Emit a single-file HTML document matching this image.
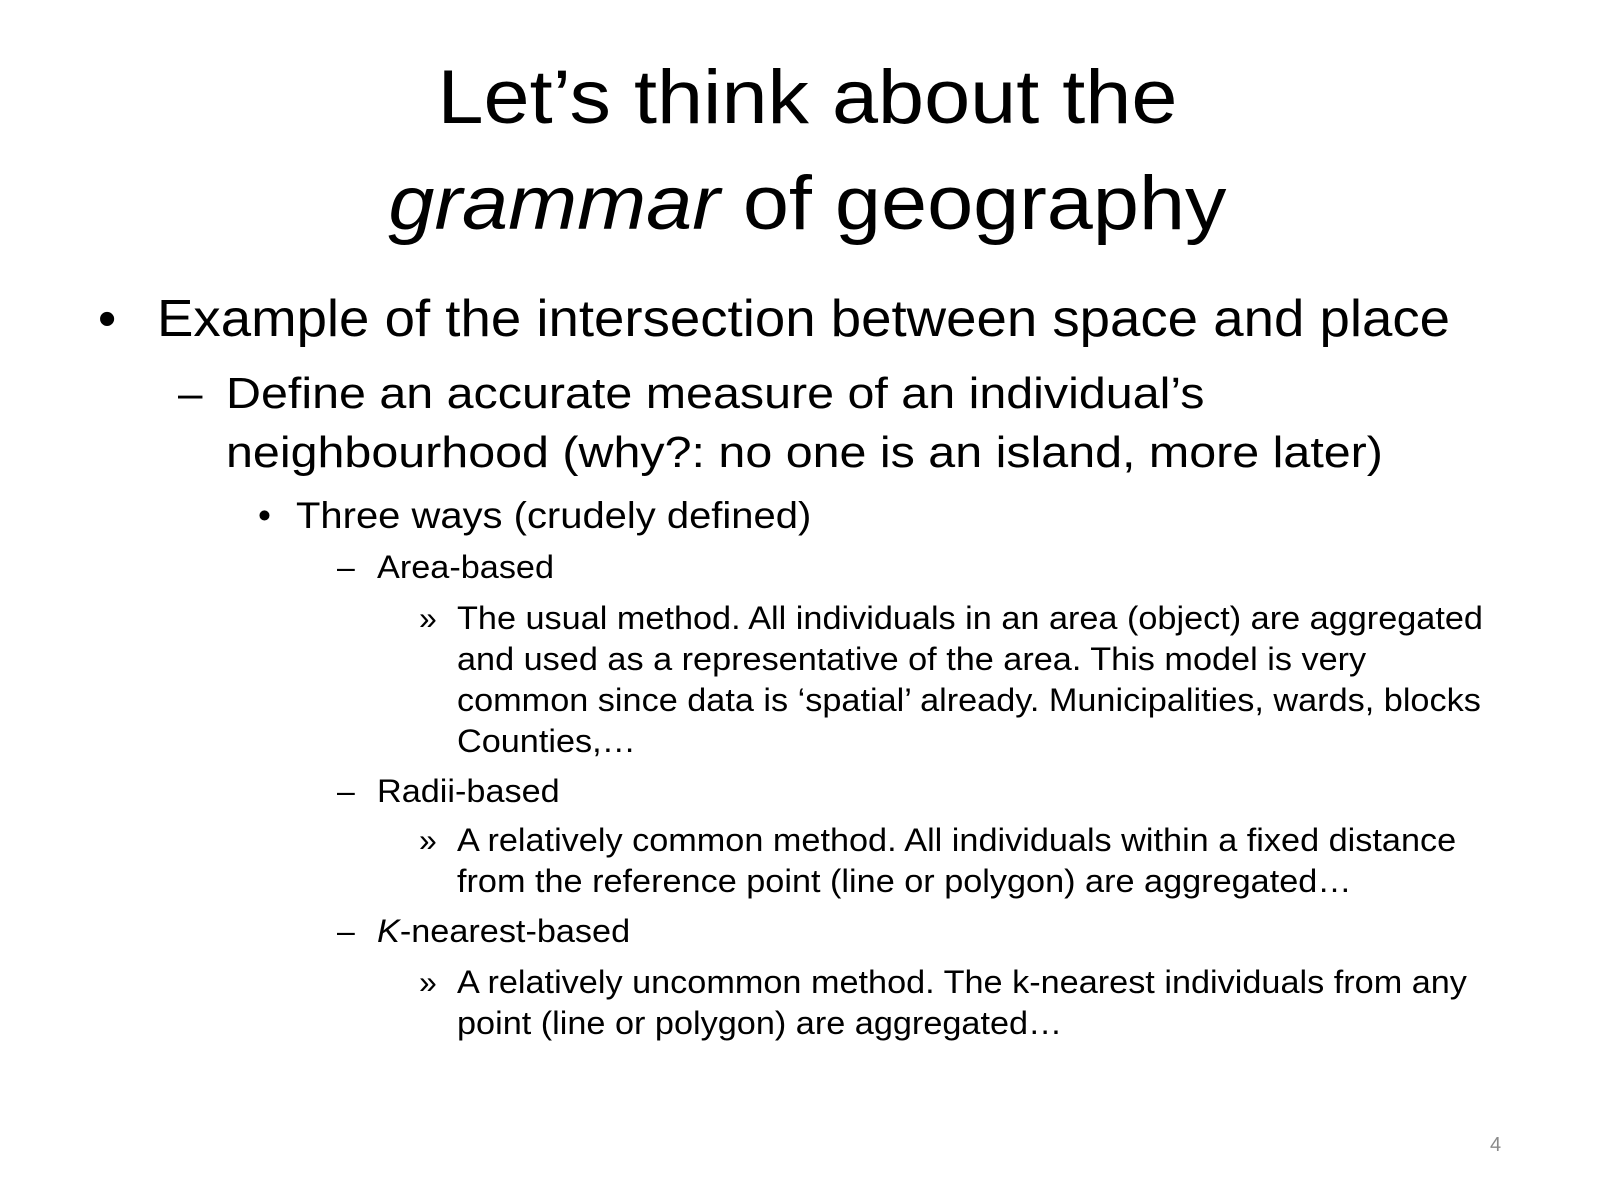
<!DOCTYPE html>
<html><head><meta charset="utf-8"><style>
html,body{margin:0;padding:0;background:#fff;}
body{width:1600px;height:1200px;position:relative;overflow:hidden;font-family:"Liberation Sans",sans-serif;color:#000;}
.l{position:absolute;white-space:nowrap;line-height:1;transform-origin:0 0;transform:scaleX(1.07);}
.c{position:absolute;white-space:nowrap;line-height:1;left:0;width:1600px;text-align:center;}
.c span{display:inline-block;transform:scaleX(1.09);}
</style></head><body>
<div class="c" style="top:60px;font-size:76px;left:7px"><span>Let’s think about the</span></div>
<div class="c" style="top:166px;font-size:76px;left:7px"><span><i>grammar</i> of geography</span></div>

<div class="l" style="left:98px;top:293px;font-size:52px;transform:none">•</div>
<div class="l" style="left:157px;top:293px;font-size:52px;transform:scaleX(1.05)">Example of the intersection between space and place</div>

<div class="l" style="left:178px;top:372px;font-size:44px;transform:none">–</div>
<div class="l" style="left:226px;top:372px;font-size:44px;transform:scaleX(1.1)">Define an accurate measure of an individual’s</div>
<div class="l" style="left:226px;top:431px;font-size:44px;transform:scaleX(1.1)">neighbourhood (why?: no one is an island, more later)</div>

<div class="l" style="left:258px;top:497px;font-size:37px;transform:none">•</div>
<div class="l" style="left:296px;top:497px;font-size:37px;transform:scaleX(1.08)">Three ways (crudely defined)</div>

<div class="l" style="left:337px;top:551px;font-size:32px;transform:none">–</div>
<div class="l" style="left:377px;top:551px;font-size:32px">Area-based</div>
<div class="l" style="left:419px;top:602px;font-size:32px;transform:none">»</div>
<div class="l" style="left:457px;top:602px;font-size:32px">The usual method. All individuals in an area (object) are aggregated</div>
<div class="l" style="left:457px;top:643px;font-size:32px">and used as a representative of the area. This model is very</div>
<div class="l" style="left:457px;top:684px;font-size:32px">common since data is ‘spatial’ already. Municipalities, wards, blocks</div>
<div class="l" style="left:457px;top:725px;font-size:32px">Counties,…</div>

<div class="l" style="left:337px;top:775px;font-size:32px;transform:none">–</div>
<div class="l" style="left:377px;top:775px;font-size:32px">Radii-based</div>
<div class="l" style="left:419px;top:824px;font-size:32px;transform:none">»</div>
<div class="l" style="left:457px;top:824px;font-size:32px">A relatively common method. All individuals within a fixed distance</div>
<div class="l" style="left:457px;top:865px;font-size:32px">from the reference point (line or polygon) are aggregated…</div>

<div class="l" style="left:337px;top:915px;font-size:32px;transform:none">–</div>
<div class="l" style="left:377px;top:915px;font-size:32px"><i>K</i>-nearest-based</div>
<div class="l" style="left:419px;top:966px;font-size:32px;transform:none">»</div>
<div class="l" style="left:457px;top:966px;font-size:32px">A relatively uncommon method. The k-nearest individuals from any</div>
<div class="l" style="left:457px;top:1007px;font-size:32px">point (line or polygon) are aggregated…</div>

<div class="l" style="left:1490px;top:1135px;font-size:20px;color:#8a8a8a;transform:none">4</div>
</body></html>
